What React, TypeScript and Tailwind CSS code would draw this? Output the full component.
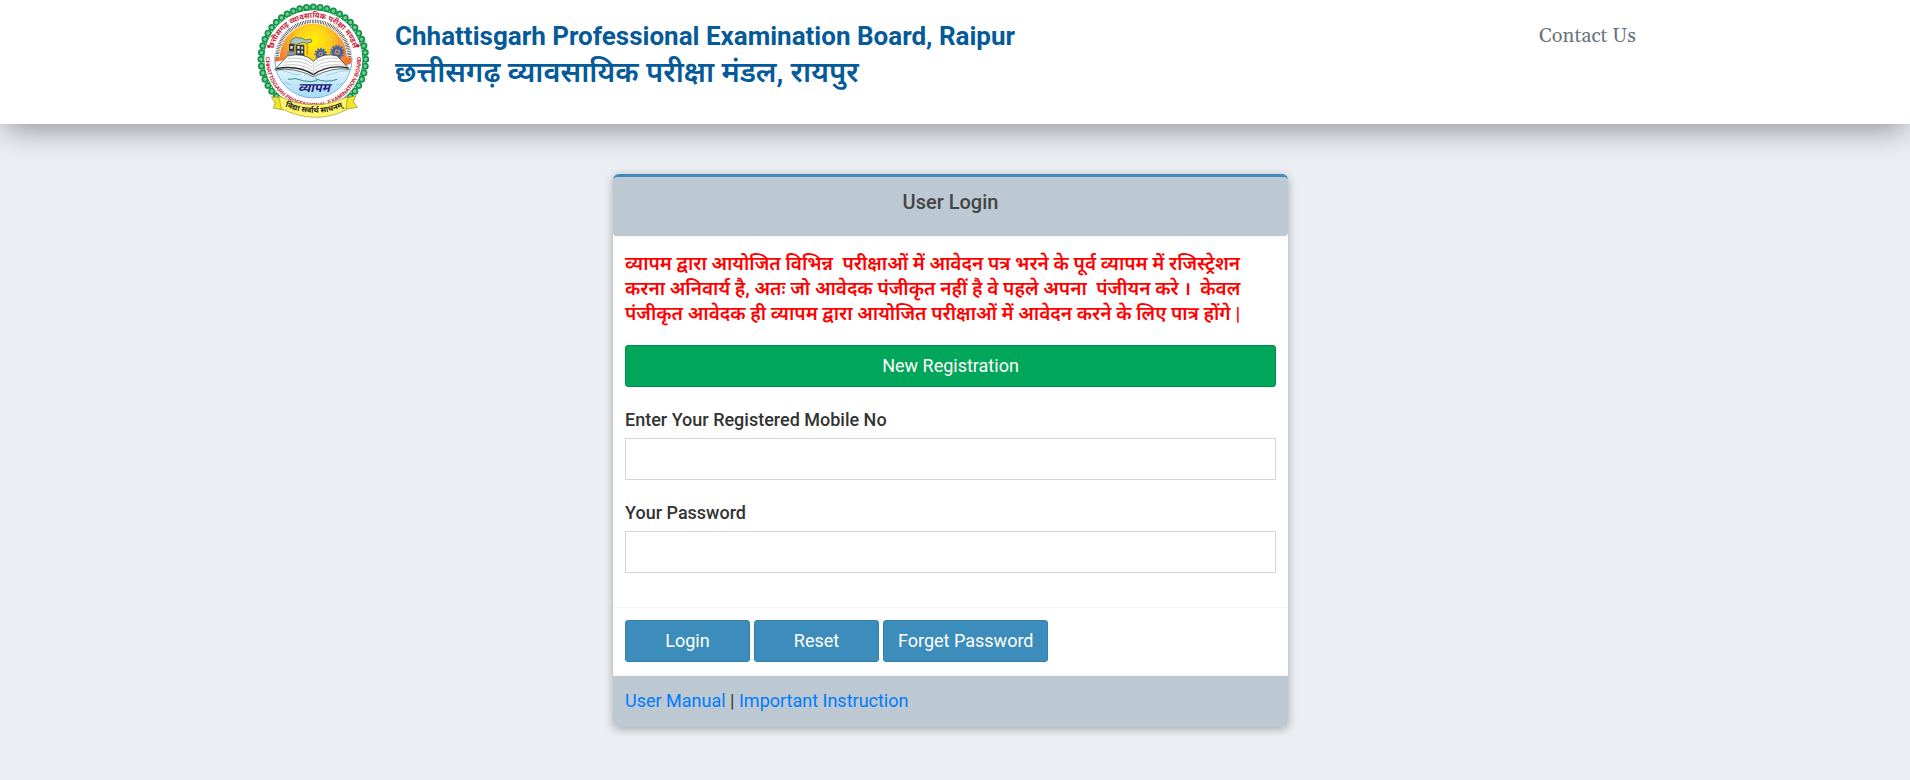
import type { ComponentProps } from "react";

const notice =
  "व्यापम द्वारा आयोजित विभिन्न  परीक्षाओं में आवेदन पत्र भरने के पूर्व व्यापम में रजिस्ट्रेशन करना अनिवार्य है, अतः जो आवेदक पंजीकृत नहीं है वे पहले अपना  पंजीयन करे ।  केवल पंजीकृत आवेदक ही व्यापम द्वारा आयोजित परीक्षाओं में आवेदन करने के लिए पात्र होंगे |";

const scallops = Array.from({ length: 48 }, (_, i) => {
  const angle = (i / 48) * Math.PI * 2;
  return { x: 190 + 157 * Math.cos(angle), y: 178 + 157 * Math.sin(angle) };
});

const Gear = ({ x, y, r }: { x: number; y: number; r: number }) => (
  <g>
    <circle cx={x} cy={y} r={r} fill="#3f61a8" />
    <circle
      cx={x}
      cy={y}
      r={r + 2}
      fill="none"
      stroke="#3f61a8"
      strokeWidth="5"
      strokeDasharray="5 4"
    />
    <circle cx={x} cy={y} r={r / 2} fill="#c98a63" />
    <circle cx={x} cy={y} r={r / 5} fill="#3f61a8" />
  </g>
);

const Logo = () => (
  <svg
    viewBox="0 0 390 375"
    className="h-[125px] w-[130px] shrink-0"
    role="img"
    aria-label="व्यापम"
    fontFamily='"Noto Sans Devanagari", "Noto Sans", sans-serif'
  >
    <defs>
      <radialGradient id="sky" gradientUnits="userSpaceOnUse" cx="190" cy="125" r="120">
        <stop offset="0" stopColor="#fff200" />
        <stop offset="0.4" stopColor="#fdd01b" />
        <stop offset="0.75" stopColor="#f79433" />
        <stop offset="1" stopColor="#ee6f2d" />
      </radialGradient>
      <linearGradient id="water" x1="0" y1="0" x2="0" y2="1">
        <stop offset="0" stopColor="#f4fbff" />
        <stop offset="1" stopColor="#a5daf4" />
      </linearGradient>
      <clipPath id="scene">
        <circle cx="190" cy="178" r="115" />
      </clipPath>
      <path id="topArc" d="M 66 178 A 124 124 0 0 1 314 178" />
      <path id="bottomArc" d="M 52 140 A 143 143 0 1 0 328 140" />
      <path id="bannerArc" d="M 92 313 Q 195 363 292 315" />
    </defs>

    {/* leafy green border */}
    {scallops.map((s, i) => (
      <circle
        key={i}
        cx={s.x}
        cy={s.y}
        r="8"
        fill="#7cc79a"
        stroke="#0b9444"
        strokeWidth="5"
      />
    ))}
    <circle cx="190" cy="178" r="149" fill="#fff" stroke="#0b9444" strokeWidth="3" />

    <g clipPath="url(#scene)">
      <rect x="70" y="58" width="240" height="140" fill="url(#sky)" />
      <path d="M70 186 Q130 172 190 196 T310 186 V296 H70Z" fill="url(#water)" />
      <path
        d="M76 212 q20 -6 36 4 t40 8 M228 226 q20 -4 36 -10 t40 -2 M84 252 q20 -8 40 2 M258 256 q20 -10 38 -2"
        fill="none"
        stroke="#6fc2e4"
        strokeWidth="2"
      />
    </g>
    <circle cx="190" cy="178" r="116" fill="none" stroke="#4c87c4" strokeWidth="2" />
    <path
      d="M82 172 A108 108 0 0 1 298 172"
      fill="none"
      stroke="#fff"
      strokeWidth="15"
    />
    <path
      d="M82 172 A108 108 0 0 1 298 172"
      fill="none"
      stroke="#333"
      strokeWidth="11"
      strokeDasharray="2 3"
    />

    {/* lab equipment */}
    <path
      d="M122 122 l14 -10 20 3 12 5 14 -3 4 8 -14 5 -14 -3 -18 6 -18 -2Z"
      fill="#a9c6c4"
      stroke="#45565b"
      strokeWidth="2"
    />
    <path d="M117 132 h16 v30 h-16Z M137 134 h26 v34 h-26Z" fill="#343c42" />
    <path
      d="M142 138 h7 v8 h-7Z M154 140 h5 v8 h-5Z M142 152 h7 v8 h-7Z M154 153 h5 v7 h-5Z M121 138 h7 v8 h-7Z"
      fill="#dfe7e6"
    />
    <path d="M110 154 h26 v14 h-26Z" fill="#8b989b" />
    <path d="M172 128 v36" stroke="#b98339" strokeWidth="3" />
    <Gear x={212} y={162} r={14} />
    <Gear x={262} y={156} r={17} />

    {/* open book */}
    <path
      d="M74 210 L112 168 Q164 156 190 184 Q218 156 262 168 L298 208 Q248 200 190 230 Q132 200 74 210Z"
      fill="#fff"
      stroke="#22282c"
      strokeWidth="2"
    />
    <path
      d="M78 206 Q144 194 190 224 Q236 192 295 204"
      fill="none"
      stroke="#22282c"
      strokeWidth="4"
    />
    <path
      d="M190 186 V228 M112 176 q50 -8 74 16 M104 186 q54 -8 82 16 M96 196 q60 -8 90 16 M266 176 q-48 -8 -72 16 M276 186 q-54 -8 -82 16 M284 196 q-60 -8 -90 16"
      fill="none"
      stroke="#a3abb0"
      strokeWidth="2"
    />
    <path
      d="M114 238 q24 -6 44 4 q22 6 44 0 M196 236 q30 14 66 2"
      fill="none"
      stroke="#2f8f8a"
      strokeWidth="3"
    />

    <text
      x="192"
      y="276"
      textAnchor="middle"
      fontSize="38"
      fontWeight="700"
      fontStyle="italic"
      fill="#25217c"
    >
      व्यापम
    </text>

    <text fontSize="23" fontWeight="700" fill="#c91f3c">
      <textPath href="#topArc" startOffset="50%" textAnchor="middle">
        छत्तीसगढ़ व्यावसायिक परीक्षा मण्डल
      </textPath>
    </text>
    <text fontSize="17" fontWeight="700" fill="#c5122f" fontFamily="Liberation Sans, sans-serif">
      <textPath href="#bottomArc" startOffset="50%" textAnchor="middle">
        CHHATTISGARH PROFESSIONAL EXAMINATION BOARD
      </textPath>
    </text>
    <circle cx="56" cy="139" r="5" fill="#d21f3c" />
    <circle cx="324" cy="137" r="5" fill="#d21f3c" />

    {/* motto ribbon */}
    <path
      d="M88 292 L64 291 L76 309 L70 324 L98 330 L101 304Z"
      fill="#f1e528"
      stroke="#8e8a28"
      strokeWidth="2"
    />
    <path
      d="M290 294 L318 287 L310 306 L322 322 L287 328Z"
      fill="#f1e528"
      stroke="#8e8a28"
      strokeWidth="2"
    />
    <path
      d="M86 288 Q192 340 292 290 L288 330 Q196 376 94 326Z"
      fill="#fff56a"
      stroke="#9b982f"
      strokeWidth="2"
    />
    <text fontSize="23" fontWeight="700" fill="#1d1d1b">
      <textPath href="#bannerArc" startOffset="50%" textAnchor="middle">
        विद्या सर्वार्थ साधनम्
      </textPath>
    </text>
  </svg>
);

const Field = ({ id, label, ...rest }: ComponentProps<"input"> & { label: string }) => (
  <div className="flex flex-col">
    <label htmlFor={id} className="mb-1 leading-7 font-medium text-[#333]">
      {label}
    </label>
    <input
      id={id}
      className="h-[42px] border border-[#d2d6de] bg-white px-3 outline-none"
      {...rest}
    />
  </div>
);

const buttonStyle =
  "h-[42px] cursor-pointer rounded-[3px] border border-[#367fa9] bg-[#3c8dbc] px-3.5 text-white";

const App = () => {
  return (
    <div className="min-h-screen bg-[#ebeef3] pb-10 font-[Roboto,'Noto_Sans_Devanagari','Noto_Sans',sans-serif] text-lg text-[#333]">
      <header className="bg-white shadow-[0_10px_30px_-5px_rgba(0,0,0,0.4)]">
        <div className="mx-auto flex h-[124px] max-w-[1410px] items-start">
          <Logo />
          <div className="ml-[15px] pt-[18px] text-[#055a99]">
            <h1 className="text-[26px] leading-9 font-bold">
              Chhattisgarh Professional Examination Board, Raipur
            </h1>
            <h2 className="text-[29px] leading-9 font-semibold">
              छत्तीसगढ़ व्यावसायिक परीक्षा मंडल, रायपुर
            </h2>
          </div>
          <nav className="mr-6 ml-auto pt-5">
            <a
              href="#"
              className="font-[Georgia,Gelasio,'Liberation_Serif',serif] text-xl leading-8 text-[#6c757d]"
            >
              Contact Us
            </a>
          </nav>
        </div>
      </header>

      <main className="pt-[50px] pr-[9px]">
        <form
          className="mx-auto w-full max-w-[675px] overflow-clip rounded-md border-t-[3px] border-[#3c8dbc] bg-white shadow-[0_2px_10px_rgba(0,0,0,0.3)]"
          onSubmit={(e) => e.preventDefault()}
        >
          <div className="h-[60px] rounded-sm border-b border-[#f4f4f4] bg-[#bcc9d2] pt-[9px] text-center">
            <h3 className="text-xl leading-8 font-medium text-[#444]">User Login</h3>
          </div>

          <div className="flex flex-col gap-[19px] px-3 pt-3.5 pb-[34px]">
            <p className="text-[19px] leading-[25px] font-semibold whitespace-pre-wrap text-[#f00]">
              {notice}
            </p>
            <button
              type="button"
              className="h-[42px] cursor-pointer rounded-[3px] border border-[#008d4c] bg-[#00a65a] text-white"
            >
              New Registration
            </button>
            <Field id="mobile" type="text" label="Enter Your Registered Mobile No" />
            <Field id="password" type="password" label="Your Password" />
          </div>

          <div className="flex gap-1 border-t border-[#f4f4f4] px-3 pt-3 pb-[13px]">
            <button type="submit" className={`${buttonStyle} w-[125px]`}>
              Login
            </button>
            <button type="reset" className={`${buttonStyle} w-[125px]`}>
              Reset
            </button>
            <button type="button" className={buttonStyle}>
              Forget Password
            </button>
          </div>

          <div className="border-t border-[#f4f4f4] bg-[#bcc9d2] px-3 pt-[11px] pb-3 leading-7">
            <a href="#" className="text-[#007bff]">
              User Manual
            </a>{" "}
            |{" "}
            <a href="#" className="text-[#007bff]">
              Important Instruction
            </a>
          </div>
        </form>
      </main>
    </div>
  );
};

export default App;
